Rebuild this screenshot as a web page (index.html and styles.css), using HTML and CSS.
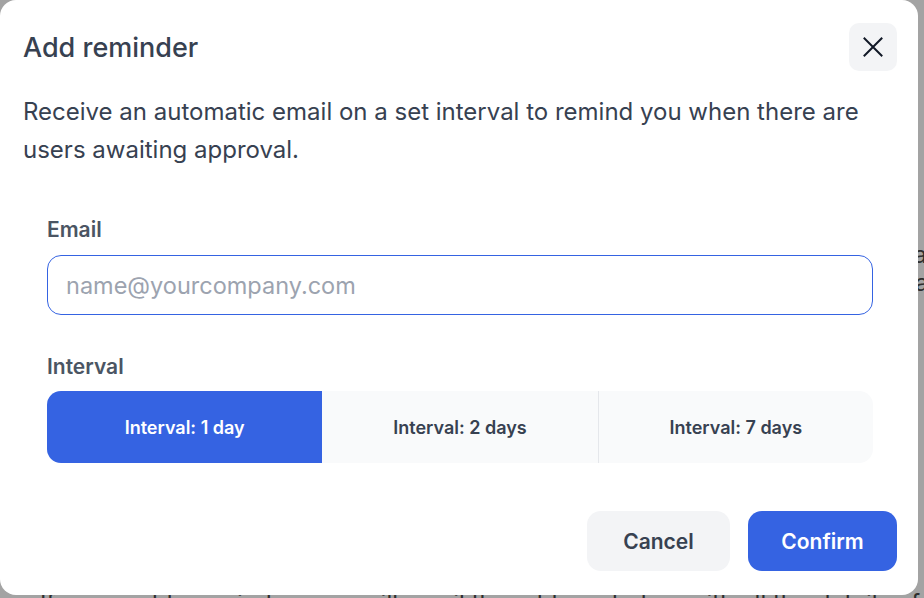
FILE: index.html
```html
<!DOCTYPE html>
<html>
<head>
    <title>Add reminder</title>
    <link rel="stylesheet" href="styles.css">
</head>
<body>
    <div class="page">
        <p class="page-line">Pending users will appear here once they have signed up and are waiting for approval</p>
        <p class="page-line">so that an administrator can review them and let them into the workspace today.</p>
        <p class="page-line page-line-low">If you enable reminders, we will email the address below with all the details of this list</p>
    </div>

    <div class="overlay">
        <div class="modal">
            <div class="modal-header">
                <h1>Add reminder</h1>
                <button class="close-button" type="button" aria-label="Close">
                    <svg width="20" height="20" viewBox="0 0 20 20" fill="none">
                        <path d="M1.5 1.5 L18.5 18.5 M18.5 1.5 L1.5 18.5" stroke="#111827" stroke-width="2" stroke-linecap="square"/>
                    </svg>
                </button>
            </div>
            <p class="description">Receive an automatic email on a set interval to remind you when there are users awaiting approval.</p>

            <form class="reminder-form">
                <label for="email">Email</label>
                <input type="email" id="email" name="email" placeholder="name@yourcompany.com">

                <div class="field-label">Interval</div>
                <div class="segments">
                    <button type="button" class="segment active">Interval: 1 day</button>
                    <button type="button" class="segment">Interval: 2 days</button>
                    <button type="button" class="segment">Interval: 7 days</button>
                </div>
            </form>

            <div class="modal-footer">
                <button type="button" class="btn btn-cancel">Cancel</button>
                <button type="button" class="btn btn-confirm">Confirm</button>
            </div>
        </div>
    </div>
</body>
</html>
```

FILE: styles.css
```css
body {
    margin: 0;
    padding: 0;
    background: #a3a3a3;
    font-family: Inter, "Noto Sans", Arial, sans-serif;
    overflow: hidden;
    height: 100vh;
}
.page {
    padding: 241px 0 0 40px;
    width: 1100px;
}
.page-line {
    margin: 0;
    font-size: 24px;
    line-height: 28px;
    color: #2e2e2e;
    white-space: nowrap;
}
.page-line-low {
    margin-top: 292px;
}
.overlay {
    position: fixed;
    top: 0;
    left: 0;
}
.modal {
    box-sizing: border-box;
    width: 918px;
    height: 595px;
    background: white;
    border-radius: 16px;
    padding: 23px 21px 24px 23px;
    display: flex;
    flex-direction: column;
}
.modal-header {
    display: flex;
    justify-content: space-between;
    align-items: center;
    height: 48px;
}
h1 {
    margin: 0;
    font-size: 27px;
    font-weight: 500;
    color: #374151;
}
.close-button {
    width: 48px;
    height: 48px;
    border: none;
    border-radius: 10px;
    background: #f3f4f6;
    display: flex;
    align-items: center;
    justify-content: center;
    padding: 0;
    cursor: pointer;
}
.description {
    margin: 22px 0 0;
    font-size: 24px;
    line-height: 38px;
    color: #374151;
    max-width: 860px;
}
.reminder-form {
    margin: 49px 24px 0;
    display: flex;
    flex-direction: column;
}
label,
.field-label {
    display: block;
    font-size: 21px;
    line-height: 24px;
    font-weight: 600;
    color: #4b5563;
    margin-bottom: 13px;
}
.field-label {
    margin-top: 40px;
    margin-bottom: 12px;
}
input {
    box-sizing: border-box;
    width: 100%;
    height: 60px;
    padding: 0 18px;
    border: 1px solid #3563e2;
    border-radius: 14px;
    font-family: inherit;
    font-size: 23.5px;
    color: #374151;
    outline: none;
}
input::placeholder {
    color: #9ca3af;
}
.segments {
    display: grid;
    grid-template-columns: repeat(3, 1fr);
    height: 72px;
    background: #f9fafb;
    border-radius: 14px;
    overflow: hidden;
}
.segment {
    border: none;
    background: transparent;
    font-family: inherit;
    font-size: 18px;
    font-weight: 600;
    color: #374151;
    cursor: pointer;
}
.segment + .segment {
    border-left: 1px solid #e5e7eb;
}
.segment.active {
    background: #3563e2;
    color: white;
}
.segment.active + .segment {
    border-left: none;
}
.modal-footer {
    margin-top: auto;
    display: flex;
    justify-content: flex-end;
    gap: 18px;
}
.btn {
    height: 60px;
    border: none;
    border-radius: 14px;
    font-family: inherit;
    font-size: 21px;
    font-weight: 600;
    cursor: pointer;
}
.btn-cancel {
    width: 143px;
    background: #f3f4f6;
    color: #374151;
}
.btn-confirm {
    width: 149px;
    background: #3563e2;
    color: white;
}
```
